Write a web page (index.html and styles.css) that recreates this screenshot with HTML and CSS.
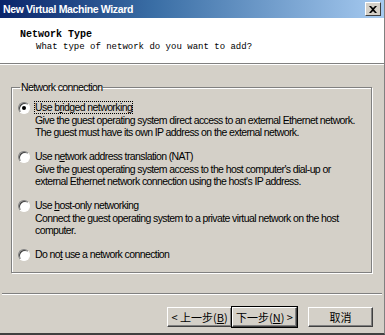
FILE: index.html
```html
<!DOCTYPE html>
<html lang="en">
<head>
  <meta charset="UTF-8" />
  <title>New Virtual Machine Wizard</title>
  <link rel="stylesheet" href="styles.css">
</head>
<body>

<div class="window">
  <div class="titlebar">
    <span class="title">New Virtual Machine Wizard</span>
    <span class="close-btn">
      <svg width="8" height="7" viewBox="0 0 8 7"><path d="M0 0h2l2 2 2-2h2L5 3.5 8 7H6L4 5 2 7H0l3-3.5z" fill="#000"/></svg>
    </span>
  </div>

  <div class="header">
    <div class="header-title">Network Type</div>
    <div class="header-sub">What type of network do you want to add?</div>
  </div>

  <div class="content">
    <fieldset class="group">
      <legend>Network connection</legend>

      <div class="option">
        <span class="radio checked"></span>
        <div class="option-text">
          <div class="option-label focused">Use b<u>r</u>idged networking</div>
          <div class="option-desc">Give the guest operating system direct access to an external Ethernet network.<br>The guest must have its own IP address on the external network.</div>
        </div>
      </div>

      <div class="option">
        <span class="radio"></span>
        <div class="option-text">
          <div class="option-label">Use n<u>e</u>twork address translation (NAT)</div>
          <div class="option-desc">Give the guest operating system access to the host computer's dial-up or<br>external Ethernet network connection using the host's IP address.</div>
        </div>
      </div>

      <div class="option">
        <span class="radio"></span>
        <div class="option-text">
          <div class="option-label">Use <u>h</u>ost-only networking</div>
          <div class="option-desc">Connect the guest operating system to a private virtual network on the host<br>computer.</div>
        </div>
      </div>

      <div class="option">
        <span class="radio"></span>
        <div class="option-text">
          <div class="option-label">Do no<u>t</u> use a network connection</div>
        </div>
      </div>
    </fieldset>
  </div>

  <div class="footer">
    <button class="btn">&lt; 上一步(<u>B</u>)</button>
    <button class="btn default">下一步(<u>N</u>) &gt;</button>
    <button class="btn cancel">取消</button>
  </div>
</div>

</body>
</html>
```

FILE: styles.css
```css
html, body {
  margin: 0;
  padding: 0;
  background: #d4d0c8;
}
.window {
  width: 385px;
  height: 335px;
  box-sizing: border-box;
  background: #d4d0c8;
  border-bottom: 2px solid #404040;
  border-right: 1px solid #808080;
  display: flex;
  flex-direction: column;
  font-family: "Liberation Sans", Arial, sans-serif;
  font-size: 10.5px;
  letter-spacing: -0.6px;
  color: #000;
}
.titlebar {
  height: 18px;
  flex: none;
  display: flex;
  align-items: center;
  justify-content: space-between;
  padding: 0 3px 0 3px;
  background: linear-gradient(to right, #0a246a, #3a6ea5 40%, #a6caf0);
}
.title {
  font-family: "Liberation Sans", Arial, sans-serif;
  font-weight: bold;
  font-size: 10.5px;
  letter-spacing: -0.35px;
  color: #fff;
}
.close-btn {
  width: 16px;
  height: 14px;
  box-sizing: border-box;
  background: #d4d0c8;
  border: 1px solid;
  border-color: #fff #404040 #404040 #fff;
  display: flex;
  align-items: center;
  justify-content: center;
}
.header {
  height: 46px;
  flex: none;
  background: #fff;
  border-bottom: 1px solid #808080;
  box-shadow: 0 1px 0 #fff;
  padding: 11px 0 0 20px;
  box-sizing: border-box;
  font-family: "Liberation Mono", "Courier New", monospace;
  letter-spacing: 0;
}
.header-title {
  font-weight: bold;
  font-size: 10px;
  line-height: 12px;
}
.header-sub {
  font-size: 9px;
  line-height: 12px;
  padding-left: 16px;
}
.content {
  flex: 1;
  padding: 17px 12px 0 11px;
}
.group {
  margin: 0;
  padding: 8px 0 0 6px;
  border: 1px solid #808080;
  box-shadow: 1px 1px 0 #fff, inset 1px 1px 0 #fff;
  height: 192px;
  box-sizing: border-box;
}
.group legend {
  padding: 0 1px;
  margin-left: 2px;
}
.option {
  display: flex;
  gap: 4px;
  margin-bottom: 12px;
}
.radio {
  width: 12px;
  height: 12px;
  flex: none;
  box-sizing: border-box;
  border-radius: 50%;
  background: #fff;
  border: 1px solid;
  border-color: #808080 #fff #fff #808080;
  box-shadow: inset 1px 1px 0 #404040;
  margin-top: 1px;
  position: relative;
}
.radio.checked::after {
  content: "";
  position: absolute;
  left: 3px;
  top: 3px;
  width: 4px;
  height: 4px;
  border-radius: 50%;
  background: #000;
}
.option-text {
  line-height: 12px;
  white-space: nowrap;
}
.option-label {
  display: inline-block;
  padding: 0 1px;
  line-height: 13px;
}
.option-label.focused {
  outline: 1px dotted #000;
  outline-offset: -1px;
}
.option-desc {
  padding-left: 1px;
}
.footer {
  flex: none;
  height: 40px;
  box-sizing: border-box;
  border-top: 1px solid #808080;
  box-shadow: inset 0 1px 0 #fff;
  margin: 0 2px;
  display: flex;
  justify-content: flex-end;
  align-items: flex-start;
  padding: 13px 9px 0 0;
}
.btn {
  width: 65px;
  height: 20px;
  box-sizing: border-box;
  background: #d4d0c8;
  border: 1px solid;
  border-color: #fff #404040 #404040 #fff;
  box-shadow: inset -1px -1px 0 #808080;
  padding: 0;
  font-family: "Noto Sans CJK SC", sans-serif;
  font-size: 11px;
  letter-spacing: 0;
  line-height: 16px;
  color: #000;
}
.btn.default {
  outline: 1px solid #000;
}
.btn.cancel {
  margin-left: 11px;
}
```
